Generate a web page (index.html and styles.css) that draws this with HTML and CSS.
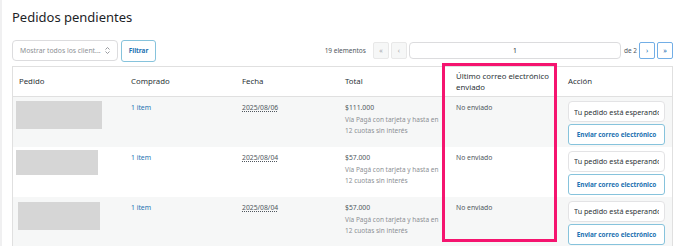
FILE: index.html
```html
<!DOCTYPE html>
<html>
<head>
    <title>Pedidos pendientes</title>
    <link rel="stylesheet" href="styles.css">
</head>
<body>
    <div class="wrap">
        <h1 class="page-title">Pedidos pendientes</h1>

        <div class="tablenav">
            <div class="client-select">
                <span>Mostrar todos los client...</span>
                <svg width="7" height="9" viewBox="0 0 7 9"><path d="M1.5 3.5 L3.5 1.5 L5.5 3.5 M1.5 5.5 L3.5 7.5 L5.5 5.5" fill="none" stroke="#8c8f94" stroke-width="0.9"/></svg>
            </div>
            <button type="button" class="btn">Filtrar</button>

            <div class="pagination">
                <span class="count">19 elementos</span>
                <span class="page-btn disabled">&laquo;</span>
                <span class="page-btn disabled">&lsaquo;</span>
                <input type="text" class="page-input" value="1">
                <span class="total-pages">de 2</span>
                <a class="page-btn">&rsaquo;</a>
                <a class="page-btn">&raquo;</a>
            </div>
        </div>

        <table class="orders">
            <thead>
                <tr>
                    <th class="col-order">Pedido</th>
                    <th class="col-bought">Comprado</th>
                    <th class="col-date">Fecha</th>
                    <th class="col-total">Total</th>
                    <th class="col-mail">Último correo electrónico enviado</th>
                    <th class="col-action">Acción</th>
                </tr>
            </thead>
            <tbody>
                <tr class="alt">
                    <td><div class="blur" style="width: 86px; height: 28px; margin-top: -1px;"></div></td>
                    <td><a class="link">1 item</a></td>
                    <td><span class="date">2025/08/06</span></td>
                    <td>$111.000<div class="via">Vía Pagá con tarjeta y hasta en 12 cuotas sin interés</div></td>
                    <td>No enviado</td>
                    <td class="action">
                        <input type="text" class="mail-input" value="Tu pedido está esperando tu pago">
                        <button type="button" class="btn btn-wide">Enviar correo electrónico</button>
                    </td>
                </tr>
                <tr>
                    <td><div class="blur" style="width: 82px; height: 25px; margin-top: -2px;"></div></td>
                    <td><a class="link">1 item</a></td>
                    <td><span class="date">2025/08/04</span></td>
                    <td>$57.000<div class="via">Vía Pagá con tarjeta y hasta en 12 cuotas sin interés</div></td>
                    <td>No enviado</td>
                    <td class="action">
                        <input type="text" class="mail-input" value="Tu pedido está esperando tu pago">
                        <button type="button" class="btn btn-wide">Enviar correo electrónico</button>
                    </td>
                </tr>
                <tr class="alt">
                    <td><div class="blur" style="width: 82px; height: 28px; margin-left: 2px;"></div></td>
                    <td><a class="link">1 item</a></td>
                    <td><span class="date">2025/08/04</span></td>
                    <td>$57.000<div class="via">Vía Pagá con tarjeta y hasta en 12 cuotas sin interés</div></td>
                    <td>No enviado</td>
                    <td class="action">
                        <input type="text" class="mail-input" value="Tu pedido está esperando tu pago">
                        <button type="button" class="btn btn-wide">Enviar correo electrónico</button>
                    </td>
                </tr>
            </tbody>
        </table>

        <!-- annotation box around the mail column -->
        <div class="highlight"></div>
    </div>
</body>
</html>
```

FILE: styles.css
```css
body {
    margin: 0;
    font-family: "Noto Sans", "Open Sans", sans-serif;
    color: #3c434a;
    background-color: #fff;
    border-left: 2px solid #f0f0f1;
    min-height: 246px;
    box-sizing: border-box;
    overflow: hidden;
}

.wrap {
    position: relative;
    padding: 0 17px 0 10px;
}

.page-title {
    margin: 0;
    padding-top: 8px;
    font-size: 13px;
    font-weight: 400;
    line-height: 18px;
    color: #1d2327;
}

.tablenav {
    display: flex;
    align-items: center;
    margin-top: 13px;
    height: 23px;
}

.client-select {
    display: flex;
    align-items: center;
    justify-content: space-between;
    width: 106px;
    height: 21px;
    padding: 0 6px 0 7px;
    box-sizing: border-box;
    border: 1px solid #dcdcde;
    border-radius: 4px;
    font-size: 6.8px;
    white-space: nowrap;
    color: #8c8f94;
}

.btn {
    font-family: inherit;
    background-color: #fff;
    color: #2271b1;
    border: 1px solid #86c3dc;
    border-radius: 3px;
    font-size: 6.4px;
    font-weight: bold;
    padding: 0;
    cursor: pointer;
}

.tablenav .btn {
    width: 35px;
    height: 22px;
    margin-left: 3px;
}

.pagination {
    margin-left: auto;
    display: flex;
    align-items: center;
    font-size: 6.5px;
    color: #50575e;
}

.count {
    margin-right: 5px;
}

.page-btn {
    display: flex;
    align-items: center;
    justify-content: center;
    width: 16px;
    height: 17px;
    box-sizing: border-box;
    border: 1px solid #72aee6;
    border-radius: 2px;
    color: #2271b1;
    font-size: 7px;
    margin-left: 2px;
}

.page-btn.disabled {
    background-color: #f6f7f7;
    border-color: #e8e8e8;
    color: #a7aaad;
}

.page-input {
    width: 212px;
    height: 17px;
    box-sizing: border-box;
    margin-left: 2px;
    border: 1px solid #dcdcde;
    border-radius: 4px;
    text-align: center;
    font-family: inherit;
    font-size: 6.8px;
    color: #2c3338;
    padding: 0;
}

.total-pages {
    margin: 0 0 0 3px;
}

.orders {
    margin-top: 4px;
    width: 661px;
    border-collapse: collapse;
    border: 1px solid #e0e0e0;
    table-layout: fixed;
    font-size: 6.8px;
}

.orders th {
    height: 29px;
    text-align: left;
    font-weight: 400;
    font-size: 7.8px;
    line-height: 11px;
    color: #2c3338;
    padding: 0 6px;
    border-bottom: 1px solid #e0e0e0;
}

.col-order { width: 100px; }
.col-bought { width: 99px; }
.col-date { width: 91px; }
.col-total { width: 99px; }
.col-mail { width: 100px; }

.orders td {
    height: 50px;
    box-sizing: border-box;
    vertical-align: top;
    padding: 5px 6px 0;
    line-height: 11px;
    color: #50575e;
}

.orders td:first-child {
    padding-left: 3px;
}

.orders tr.alt td {
    background-color: #f6f7f7;
}

.blur {
    background-color: #d6d6d6;
}

.link {
    color: #2271b1;
}

.date {
    color: #50575e;
    text-decoration: underline dotted;
}

.via {
    color: #8c8f94;
    font-size: 6.5px;
    margin-top: 1px;
    line-height: 11px;
}

.orders td.action {
    padding: 4px 6px 0;
}

.mail-input {
    display: block;
    width: 97px;
    height: 21px;
    box-sizing: border-box;
    border: 1px solid #e3e3e5;
    border-radius: 4px;
    padding: 0 5px;
    font-family: inherit;
    font-size: 7.2px;
    color: #2c3338;
    background-color: #fff;
}

.btn-wide {
    display: block;
    width: 97px;
    height: 21px;
    margin-top: 2px;
}

.highlight {
    position: absolute;
    left: 440px;
    top: 63px;
    width: 115px;
    height: 179px;
    box-sizing: border-box;
    border: 3px solid #f5146f;
    pointer-events: none;
}
```
